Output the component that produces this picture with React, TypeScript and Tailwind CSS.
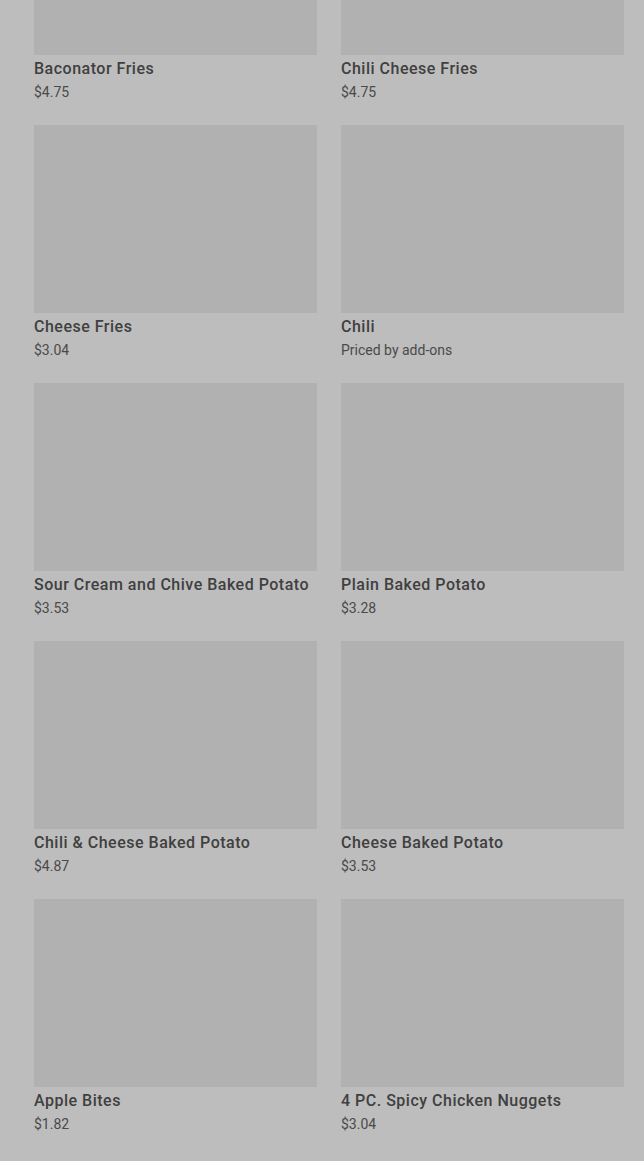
const items = [
  { name: "Baconator Fries", price: "$4.75" },
  { name: "Chili Cheese Fries", price: "$4.75" },
  { name: "Cheese Fries", price: "$3.04" },
  { name: "Chili", price: "Priced by add-ons" },
  { name: "Sour Cream and Chive Baked Potato", price: "$3.53" },
  { name: "Plain Baked Potato", price: "$3.28" },
  { name: "Chili & Cheese Baked Potato", price: "$4.87" },
  { name: "Cheese Baked Potato", price: "$3.53" },
  { name: "Apple Bites", price: "$1.82" },
  { name: "4 PC. Spicy Chicken Nuggets", price: "$3.04" },
];

function MenuItem({ name, price }: { name: string; price: string }) {
  return (
    <li className="flex flex-col pb-[23px]">
      <div className="h-[188px] w-full bg-[#b1b1b1]" />
      <p className="truncate pt-[2px] text-[16px] leading-6 font-medium tracking-[0.5px] text-[#404040]">
        {name}
      </p>
      <p className="mt-[1px] text-[14px] leading-5 text-[#4a4a4a]">{price}</p>
    </li>
  );
}

export default function App() {
  return (
    <div
      className="h-[1161px] overflow-hidden bg-[#bdbdbd]"
      style={{ fontFamily: "Roboto, 'Noto Sans', sans-serif" }}
    >
      <ul className="-mt-[133px] grid grid-cols-2 gap-x-6 pr-5 pl-[34px]">
        {items.map((item) => (
          <MenuItem key={item.name} {...item} />
        ))}
      </ul>
    </div>
  );
}
